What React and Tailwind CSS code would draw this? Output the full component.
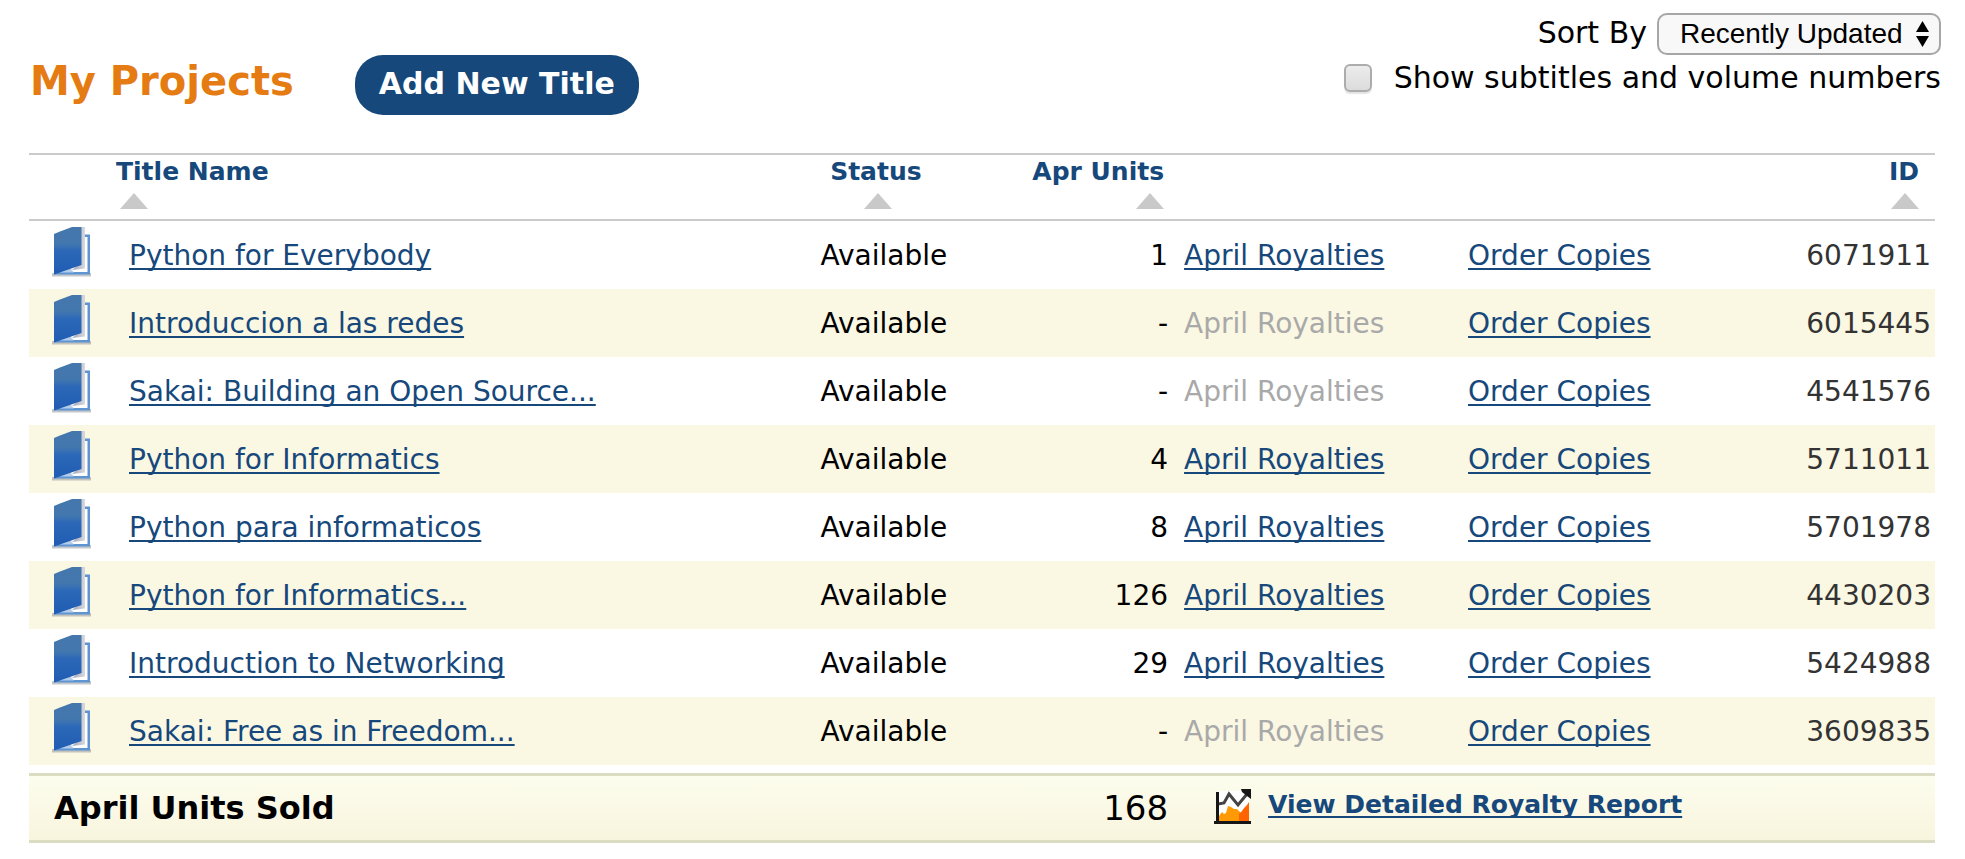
import React, { useState } from 'react';

const projects = [
  { title: 'Python for Everybody', units: '1', id: '6071911' },
  { title: 'Introduccion a las redes', units: '-', id: '6015445' },
  { title: 'Sakai: Building an Open Source...', units: '-', id: '4541576' },
  { title: 'Python for Informatics', units: '4', id: '5711011' },
  { title: 'Python para informaticos', units: '8', id: '5701978' },
  { title: 'Python for Informatics...', units: '126', id: '4430203' },
  { title: 'Introduction to Networking', units: '29', id: '5424988' },
  { title: 'Sakai: Free as in Freedom...', units: '-', id: '3609835' },
];

function TextLink({ children, className = '' }) {
  return (
    <a
      href="#"
      className={`text-[#16487b] underline decoration-2 underline-offset-[3px] [text-decoration-skip-ink:none] ${className}`}
    >
      {children}
    </a>
  );
}

function SortArrow() {
  return (
    <svg className="h-4 w-7" viewBox="0 0 28 16" aria-hidden="true">
      <path d="M14 0 28 16H0Z" fill="#c9c9c9" />
    </svg>
  );
}

function SortHeader({ label, align }) {
  return (
    <button type="button" className={`flex flex-col gap-1 font-bold leading-[34px] text-[#16487b] ${align}`}>
      <span>{label}</span>
      <span className="block pl-1">
        <SortArrow />
      </span>
    </button>
  );
}

function BookIcon() {
  return (
    <svg className="h-[50px] w-10" viewBox="0 0 40 50" aria-hidden="true">
      <defs>
        <linearGradient id="cover" x1="0" y1="0" x2="0" y2="1">
          <stop offset="0" stopColor="#4577ad" />
          <stop offset="0.35" stopColor="#4277ae" />
          <stop offset="0.5" stopColor="#2c68b8" />
          <stop offset="1" stopColor="#1f5cb2" />
        </linearGradient>
        <linearGradient id="pages" x1="0" y1="0" x2="1" y2="0">
          <stop offset="0" stopColor="#9fa6b6" />
          <stop offset="1" stopColor="#d9d9de" />
        </linearGradient>
      </defs>
      <path d="M0 46H39V49.500H0Z" fill="#8b8f98" opacity="0.5" />
      <path d="M2 7.500H38V47.500H2Z" fill="#5f94d2" />
      <path d="M5 10H35.500V45H5Z" fill="#fff" />
      <path d="M7 45.500 18 41 22 45.500Z" fill="#b4cdeb" />
      <path d="M26 0H33V41.500L20 43 26 38Z" fill="url(#pages)" />
      <path d="M2 7 8 4.500 20 0H29.500V38L2 47.500Z" fill="url(#cover)" />
    </svg>
  );
}

function ReportIcon() {
  return (
    <svg className="h-9 w-[38px] shrink-0" viewBox="0 0 38 36" aria-hidden="true">
      <path d="M5 2H35V32H5Z" fill="#fff" />
      <path d="M5 32V27L8 23 10 25 12 24 14 17 17 18 20 20 23 20 26 23 28 25V32Z" fill="#ff9a05" />
      <path d="M25 32V25L28 22 30 19 33 16 35 13V32Z" fill="#ff6400" />
      <path d="M4 15 10 14 15 5 24 16 33 5" fill="none" stroke="#444" strokeWidth="3" />
      <path d="M27 0H37V10L33 7 28 3Z" fill="#161616" />
      <path d="M3.500 3V33" fill="none" stroke="#161616" strokeWidth="3" />
      <path d="M0 33.500H37" fill="none" stroke="#161616" strokeWidth="3" />
    </svg>
  );
}

function Toolbar() {
  const [subtitles, setSubtitles] = useState(false);
  return (
    <header className="flex items-start justify-between">
      <div className="flex items-start gap-[61px]">
        <h1 className="pt-[42px] text-[40px] leading-[52px] font-bold text-[#e57b13]">My Projects</h1>
        <div className="pt-[42px]">
          <button
            type="button"
            className="h-[60px] rounded-[28px] bg-[#16487b] px-6 pb-1 text-[30px] font-bold text-white"
          >
            Add New Title
          </button>
        </div>
      </div>
      <div className="flex flex-col items-end text-[30px] leading-10">
        <div className="flex items-start gap-[10px]">
          <label htmlFor="sort">Sort By</label>
          <div className="relative">
            <select
              id="sort"
              className="block h-[42px] w-[284px] appearance-none rounded-[10px] border-2 border-[#a6a6a6] bg-[#f8f8f8] pl-[21px] font-['Liberation_Sans',Arial,sans-serif] text-[28px] leading-9 text-black"
            >
              <option>Recently Updated</option>
              <option>Title Name</option>
            </select>
            <svg
              className="pointer-events-none absolute top-2 right-3 h-[26px] w-[13px]"
              viewBox="0 0 13 26"
              aria-hidden="true"
            >
              <path d="M6.500 0 13 11H0ZM6.500 26 13 15H0Z" fill="#000" />
            </svg>
          </div>
        </div>
        <label className="flex items-center gap-[22px] pt-[3px]">
          <input
            type="checkbox"
            checked={subtitles}
            onChange={(e) => setSubtitles(e.target.checked)}
            className="size-7 appearance-none rounded-md border-2 border-[#acacac] bg-linear-to-b from-[#ececec] to-[#dcdcdc] shadow-[0_2px_1px_#e4e4e4] checked:from-[#5b9be8] checked:to-[#2f72d0]"
          />
          Show subtitles and volume numbers
        </label>
      </div>
    </header>
  );
}

export default function App() {
  return (
    <main className="min-h-screen bg-white pt-[13px] pb-4 font-['DejaVu_Sans',Verdana,sans-serif] text-black">
      <div className="pr-6 pl-[30px]">
        <Toolbar />
      </div>
      <div className="pt-[38px] pr-[30px] pl-[29px]">
        <table className="w-full table-fixed border-separate border-spacing-0 text-[28px]">
          <colgroup>
            <col className="w-[100px]" />
            <col />
            <col className="w-[10.5%]" />
            <col className="w-[10.5%]" />
            <col className="w-[14.9%]" />
            <col className="w-[14.9%]" />
            <col className="w-[9.6%]" />
          </colgroup>
          <thead>
            <tr className="h-[68px] text-[25px] *:border-y-2 *:border-[#cbcbcb] *:p-0 *:align-top">
              <th colSpan={2} scope="col">
                <div className="flex pl-[87px]">
                  <SortHeader label="Title Name" align="items-start" />
                </div>
              </th>
              <th scope="col">
                <div className="flex justify-center pr-4">
                  <SortHeader label="Status" align="items-center" />
                </div>
              </th>
              <th scope="col">
                <div className="flex justify-end pr-5">
                  <SortHeader label="Apr Units" align="items-end" />
                </div>
              </th>
              <td />
              <td />
              <th scope="col">
                <div className="flex justify-end pr-4">
                  <SortHeader label="ID" align="items-end" />
                </div>
              </th>
            </tr>
          </thead>
          <tbody>
            {projects.map((p) => (
              <tr key={p.id} className="h-[68px] even:bg-[#faf7e3] *:p-0 *:pt-[2px]">
                <td className="align-top">
                  <div className="pt-1 pl-[23px]">
                    <BookIcon />
                  </div>
                </td>
                <td className="truncate">
                  <TextLink>{p.title}</TextLink>
                </td>
                <td className="text-center">Available</td>
                <td>
                  <div className="pr-4 text-right">{p.units}</div>
                </td>
                <td>
                  {p.units === '-' ? (
                    <span className="text-[#a9a9a9]">April Royalties</span>
                  ) : (
                    <TextLink>April Royalties</TextLink>
                  )}
                </td>
                <td>
                  <TextLink>Order Copies</TextLink>
                </td>
                <td>
                  <div className="pr-1 text-right text-[#333]">{p.id}</div>
                </td>
              </tr>
            ))}
          </tbody>
          <tfoot>
            <tr className="h-2" aria-hidden="true">
              <td colSpan={7} className="p-0" />
            </tr>
            <tr className="h-[70px] *:border-t-3 *:border-b-3 *:border-[#dcdcc2] *:bg-linear-to-b *:from-[#fdfdee] *:to-[#f8f5de] *:p-0">
              <th colSpan={3} scope="row" className="text-left text-[32px]">
                <div className="pl-[25px]">April Units Sold</div>
              </th>
              <td className="text-[34px]">
                <div className="pr-4 text-right">168</div>
              </td>
              <td colSpan={3}>
                <div className="flex items-start gap-4 pb-[2px] pl-[30px]">
                  <ReportIcon />
                  <TextLink className="text-[25px] leading-8 font-bold">View Detailed Royalty Report</TextLink>
                </div>
              </td>
            </tr>
          </tfoot>
        </table>
      </div>
    </main>
  );
}
